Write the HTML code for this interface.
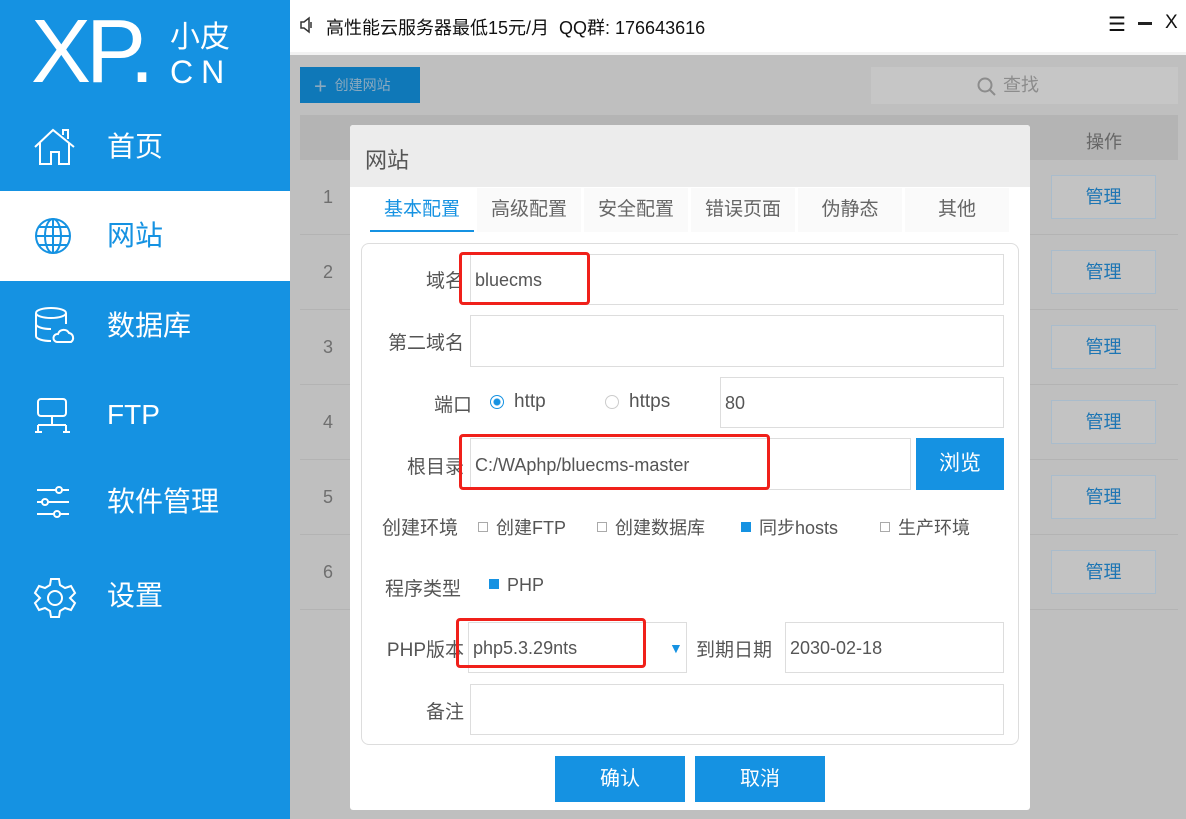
<!DOCTYPE html><html><head><meta charset="utf-8"><style>
*{box-sizing:border-box;margin:0;padding:0}
body{width:1186px;height:819px;overflow:hidden;position:relative;font-family:"Liberation Sans","Noto Sans CJK SC",sans-serif;background:#bfbfbf}
.a{position:absolute}
.side{left:0;top:0;width:290px;height:819px;background:#1592e2;color:#fff}
.nav{position:absolute;left:0;width:290px;height:90px;font-size:28px;line-height:90px;padding-left:107px}
.nav svg{position:absolute;left:33px;top:25px}
.top{left:290px;top:0;width:896px;height:52px;background:#fff;font-size:18px;color:#111}
.inp{position:absolute;border:1px solid #ddd;background:#fff;font-size:18px;color:#555;padding-left:4px}
.lbl{position:absolute;font-size:19px;color:#555;text-align:right}
.red{position:absolute;border:3px solid #f0201a;border-radius:4px}
.mg{position:absolute;left:1051px;width:105px;height:44px;border:1px solid #a9bccc;color:#1d76b4;font-size:18px;text-align:center;line-height:42px;background:#c3c3c3}
.num{position:absolute;left:323px;font-size:18px;color:#6f6f6f}
.cb{display:inline-block;width:10px;height:10px;border:1px solid #aaa;vertical-align:middle;margin-right:8px;background:#fff;position:relative;top:-2px}
.cb.on{background:#1592e2;border-color:#1592e2}
.t{position:absolute;font-size:19px;color:#555}
</style></head><body>
<div class="a side">
<div class="a" style="left:31px;top:4px;font-size:90px;line-height:96px;letter-spacing:-5px">XP.</div>
<div class="a" style="left:170px;top:12px;font-size:30px">小皮</div>
<div class="a" style="left:170px;top:54px;font-size:32px;letter-spacing:8px">CN</div>
<div class="nav" style="top:102px">首页<svg width="44" height="40" viewBox="0 0 44 40" fill="none" stroke="#fff" stroke-width="2"><path d="M2 20L20 3L41 20M7 16V37H18V25H26V37H36V16M30 8V3H35V12"/></svg></div>
<div class="nav" style="top:191px;background:#fff;color:#1592e2">网站<svg width="40" height="40" viewBox="0 0 40 40" fill="none" stroke="#1592e2" stroke-width="2"><circle cx="20" cy="20" r="17"/><ellipse cx="20" cy="20" rx="8" ry="17"/><path d="M3 20H37M6 11H34M6 29H34M20 3V37"/></svg></div>
<div class="nav" style="top:281px">数据库<svg width="42" height="40" viewBox="0 0 42 40" fill="none" stroke="#fff" stroke-width="2"><ellipse cx="18" cy="7" rx="15" ry="5"/><path d="M3 7V30C3 33 10 35 18 35M3 18C3 21 10 23 18 23M33 7V18"/><path d="M24 36H38A5 5 0 0 0 36 27A6 6 0 0 0 25 28A4 4 0 0 0 24 36Z"/></svg></div>
<div class="nav" style="top:370px">FTP<svg width="40" height="40" viewBox="0 0 40 40" fill="none" stroke="#fff" stroke-width="2"><rect x="5" y="4" width="28" height="17" rx="3"/><path d="M19 21V30M5 30H33M5 30V37M33 30V37M2 37H9M30 37H37"/></svg></div>
<div class="nav" style="top:457px">软件管理<svg width="40" height="40" viewBox="0 0 40 40" fill="none" stroke="#fff" stroke-width="2"><path d="M4 8H36M4 20H36M4 32H36"/><circle cx="26" cy="8" r="3" fill="#1592e2"/><circle cx="12" cy="20" r="3" fill="#1592e2"/><circle cx="24" cy="32" r="3" fill="#1592e2"/></svg></div>
<div class="nav" style="top:551px">设置<svg width="44" height="44" viewBox="0 0 44 44" fill="none" stroke="#fff" stroke-width="2"><path d="M18 3H26L27 9L32 12L38 10L42 17L37 22L42 27L38 34L32 32L27 35L26 41H18L17 35L12 32L6 34L2 27L7 22L2 17L6 10L12 12L17 9Z"/><circle cx="22" cy="22" r="7"/></svg></div>
</div>
<div class="a top"><svg class="a" style="left:10px;top:16px" width="14" height="18" viewBox="0 0 14 18" fill="none" stroke="#333" stroke-width="1.5"><path d="M1 6H4L9 2V16L4 12H1Z"/><path d="M11 6V12"/></svg><span class="a" style="left:36px;top:14px">高性能云服务器最低15元/月&nbsp; QQ群: 176643616</span>
<span class="a" style="left:818px;top:12px;font-size:20px">☰</span><span class="a" style="left:848px;top:22px;width:14px;height:3px;background:#222"></span><span class="a" style="left:875px;top:12px;font-size:19px">X</span></div>
<div class="a" style="left:290px;top:52px;width:896px;height:3px;background:#f2f2f2"></div>
<div class="a" style="left:300px;top:67px;width:120px;height:36px;background:#0f78b8;color:#8aa9bf;font-size:14px;line-height:36px;padding-left:14px"><span style="font-size:22px;vertical-align:middle">+</span>&nbsp; 创建网站</div>
<div class="a" style="left:871px;top:67px;width:307px;height:37px;background:#c6c6c6;color:#8c8c8c;font-size:18px;line-height:37px;padding-left:132px">查找</div>
<svg class="a" style="left:977px;top:77px" width="20" height="20" viewBox="0 0 20 20" fill="none" stroke="#8c8c8c" stroke-width="2"><circle cx="8" cy="8" r="6.5"/><path d="M13 13L18 18"/></svg>
<div class="a" style="left:300px;top:115px;width:878px;height:45px;background:#b4b4b4"></div>
<div class="t" style="left:1086px;top:128px;color:#666;font-size:18px">操作</div>
<div class="num" style="top:187px">1</div><div class="num" style="top:262px">2</div><div class="num" style="top:337px">3</div><div class="num" style="top:412px">4</div><div class="num" style="top:487px">5</div><div class="num" style="top:562px">6</div>
<div class="a" style="left:300px;top:234px;width:878px;height:1px;background:#b3b3b3"></div>
<div class="a" style="left:300px;top:309px;width:878px;height:1px;background:#b3b3b3"></div>
<div class="a" style="left:300px;top:384px;width:878px;height:1px;background:#b3b3b3"></div>
<div class="a" style="left:300px;top:459px;width:878px;height:1px;background:#b3b3b3"></div>
<div class="a" style="left:300px;top:534px;width:878px;height:1px;background:#b3b3b3"></div>
<div class="a" style="left:300px;top:609px;width:878px;height:1px;background:#b3b3b3"></div>
<div class="mg" style="top:175px">管理</div><div class="mg" style="top:250px">管理</div><div class="mg" style="top:325px">管理</div><div class="mg" style="top:400px">管理</div><div class="mg" style="top:475px">管理</div><div class="mg" style="top:550px">管理</div>

<div class="a" style="left:350px;top:125px;width:680px;height:685px;background:#fff;border-radius:3px"></div>
<div class="a" style="left:350px;top:125px;width:680px;height:62px;background:#ececec;border-radius:3px 3px 0 0"></div>
<div class="t" style="left:365px;top:143px;font-size:22px;color:#555">网站</div>
<div class="a" style="left:370px;top:188px;width:640px;height:44px;font-size:19px;color:#666">
<span class="a" style="left:0;width:104px;height:44px;line-height:44px;text-align:center;color:#1592e2;border-bottom:2px solid #1592e2">基本配置</span>
<span class="a" style="left:107px;width:104px;line-height:44px;text-align:center;background:#fafafa">高级配置</span>
<span class="a" style="left:214px;width:104px;line-height:44px;text-align:center;background:#fafafa">安全配置</span>
<span class="a" style="left:321px;width:104px;line-height:44px;text-align:center;background:#fafafa">错误页面</span>
<span class="a" style="left:428px;width:104px;line-height:44px;text-align:center;background:#fafafa">伪静态</span>
<span class="a" style="left:535px;width:104px;line-height:44px;text-align:center;background:#fafafa">其他</span></div>
<div class="a" style="left:361px;top:243px;width:658px;height:502px;border:1px solid #ddd;border-radius:8px"></div>
<div class="lbl" style="left:360px;width:104px;top:266px">域名</div>
<div class="inp" style="left:470px;top:254px;width:534px;height:51px;line-height:51px">bluecms</div>
<div class="red" style="left:459px;top:252px;width:131px;height:53px"></div>
<div class="lbl" style="left:360px;width:104px;top:328px">第二域名</div>
<div class="inp" style="left:470px;top:315px;width:534px;height:52px"></div>
<div class="lbl" style="left:360px;width:112px;top:390px">端口</div>
<div class="t" style="left:490px;top:391px"><span style="display:inline-block;width:14px;height:14px;border:1px solid #1592e2;border-radius:50%;vertical-align:middle;background:radial-gradient(#1592e2 3px,#fff 4px);margin-right:10px"></span>http</div>
<div class="t" style="left:605px;top:391px"><span style="display:inline-block;width:14px;height:14px;border:1px solid #ccc;border-radius:50%;vertical-align:middle;margin-right:10px"></span>https</div>
<div class="inp" style="left:720px;top:377px;width:284px;height:51px;line-height:51px">80</div>
<div class="lbl" style="left:360px;width:104px;top:452px">根目录</div>
<div class="inp" style="left:470px;top:438px;width:441px;height:52px;line-height:52px">C:/WAphp/bluecms-master</div>
<div class="a" style="left:916px;top:438px;width:88px;height:52px;background:#1592e2;color:#fff;font-size:21px;text-align:center;line-height:52px">浏览</div>
<div class="red" style="left:459px;top:434px;width:311px;height:56px"></div>
<div class="t" style="left:382px;top:513px">创建环境</div>
<div class="t" style="left:478px;top:514px;font-size:18px"><span class="cb"></span>创建FTP</div>
<div class="t" style="left:597px;top:514px;font-size:18px"><span class="cb"></span>创建数据库</div>
<div class="t" style="left:741px;top:514px;font-size:18px"><span class="cb on"></span>同步hosts</div>
<div class="t" style="left:880px;top:514px;font-size:18px"><span class="cb"></span>生产环境</div>
<div class="t" style="left:385px;top:574px">程序类型</div>
<div class="t" style="left:489px;top:575px;font-size:18px"><span class="cb on"></span>PHP</div>
<div class="lbl" style="left:360px;width:104px;top:635px">PHP版本</div>
<div class="inp" style="left:468px;top:622px;width:219px;height:51px;line-height:51px">php5.3.29nts<span class="a" style="left:200px;top:0;color:#1592e2;font-size:14px">▼</span></div>
<div class="red" style="left:456px;top:618px;width:190px;height:50px"></div>
<div class="t" style="left:696px;top:635px">到期日期</div>
<div class="inp" style="left:785px;top:622px;width:219px;height:51px;line-height:51px">2030-02-18</div>
<div class="lbl" style="left:360px;width:104px;top:697px">备注</div>
<div class="inp" style="left:470px;top:684px;width:534px;height:51px"></div>
<div class="a" style="left:555px;top:756px;width:130px;height:46px;background:#1592e2;color:#fff;font-size:20px;text-align:center;line-height:46px">确认</div>
<div class="a" style="left:695px;top:756px;width:130px;height:46px;background:#1592e2;color:#fff;font-size:20px;text-align:center;line-height:46px">取消</div>
</body></html>
